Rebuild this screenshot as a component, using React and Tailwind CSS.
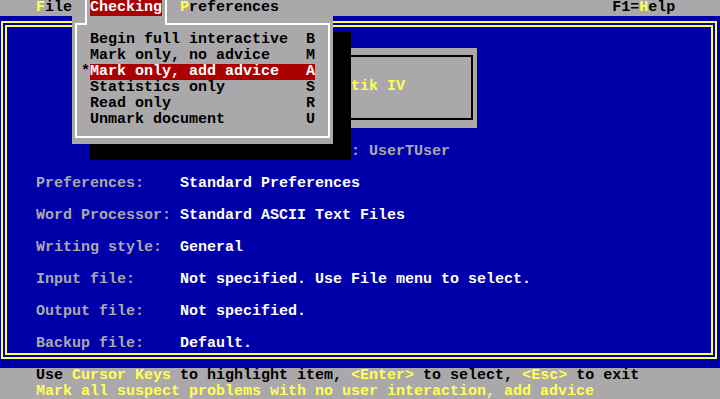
const GRAY = "bg-[#aaa8aa]";

const fields = [
  ["Preferences:", "Standard Preferences"],
  ["Word Processor:", "Standard ASCII Text Files"],
  ["Writing style:", "General"],
  ["Input file:", "Not specified. Use File menu to select."],
  ["Output file:", "Not specified."],
  ["Backup file:", "Default."],
];

const items = [
  ["Begin full interactive", "B"],
  ["Mark only, no advice", "M"],
  ["Mark only, add advice", "A", true],
  ["Statistics only", "S"],
  ["Read only", "R"],
  ["Unmark document", "U"],
];

function MenuBar() {
  return (
    <div className={`h-4 whitespace-pre text-black ${GRAY}`}>
      {"    "}
      <span className="text-[#ffff55]">F</span>ile{"  "}
      <span className="bg-[#aa0000] text-white">Checking</span>
      {"  "}
      <span className="text-[#ffff55]">P</span>references
      {"                                     "}F1=
      <span className="text-[#ffff55]">H</span>elp
    </div>
  );
}

function Dropdown() {
  return (
    <>
      {/* shadow */}
      <div className="absolute left-[90px] top-[32px] h-[128px] w-[261px] bg-black" />
      <div className={`absolute left-[72px] top-[16px] h-[128px] w-[261px] ${GRAY}`}>
        {/* box lines */}
        <div className="absolute left-[3px] top-[7px] h-[115px] w-[255px] border-2 border-t-0 border-white" />
        <div className="absolute left-[3px] top-[7px] h-[2px] w-[12px] bg-white" />
        <div className="absolute left-[93px] top-[7px] h-[2px] w-[165px] bg-white" />
        <div className="absolute left-[13px] top-[-16px] h-[25px] w-[2px] bg-white" />
        <div className="absolute left-[93px] top-[-16px] h-[25px] w-[2px] bg-white" />

        <div className="relative flex flex-col pt-4">
          {items.map(([label, key, active]) => (
            <div key={key} className="flex h-4 whitespace-pre pl-[1ch] text-black">
              <span className="w-[1ch]">{active ? "*" : " "}</span>
              <span
                className={`flex w-[25ch] justify-between ${
                  active ? "bg-[#aa0000] text-white" : ""
                }`}
              >
                <span>{label}</span>
                <span>{key}</span>
              </span>
            </div>
          ))}
        </div>
      </div>
    </>
  );
}

export default function App() {
  return (
    <div className="relative h-[399px] w-[720px] overflow-hidden bg-[#0000aa] font-['Liberation_Mono','DejaVu_Sans_Mono',monospace] text-[15px] leading-4 font-bold">
      <MenuBar />

      {/* Main window */}
      <main className="h-[352px] pt-[5px] pr-[3px] pb-[9px] pl-[1px]">
        <div className="h-full border-[6px] border-double border-[#ffff55] pt-[21px] pl-[29px]">
          {/* Title box */}
          <div className={`ml-[21ch] h-[80px] w-[28ch] px-[4px] pt-[7px] pb-[8px] ${GRAY}`}>
            <div className="flex h-full items-center justify-center border-2 border-black pb-[2px] text-[#ffff55]">
              Grammatik IV
            </div>
          </div>

          <div className="mt-4 h-4 whitespace-pre pl-[22ch] text-[#aaaaaa]">
            Registered to: UserTUser
          </div>

          <div className="mt-4 flex flex-col gap-4">
            {fields.map(([label, value]) => (
              <div key={label} className="flex h-4 whitespace-pre">
                <span className="w-[16ch] text-[#aaaaaa]">{label}</span>
                <span className="text-white">{value}</span>
              </div>
            ))}
          </div>
        </div>
      </main>

      {/* Status lines */}
      <footer className={`h-8 whitespace-pre ${GRAY}`}>
        <div className="h-4 text-black">
          {"    Use "}
          <span className="text-[#ffff55]">Cursor Keys</span>
          {" to highlight item, "}
          <span className="text-[#ffff55]">&lt;Enter&gt;</span>
          {" to select, "}
          <span className="text-[#ffff55]">&lt;Esc&gt;</span>
          {" to exit"}
        </div>
        <div className="h-4 text-[#ffff55]">
          {"    Mark all suspect problems with no user interaction, add advice"}
        </div>
      </footer>

      <Dropdown />
    </div>
  );
}
